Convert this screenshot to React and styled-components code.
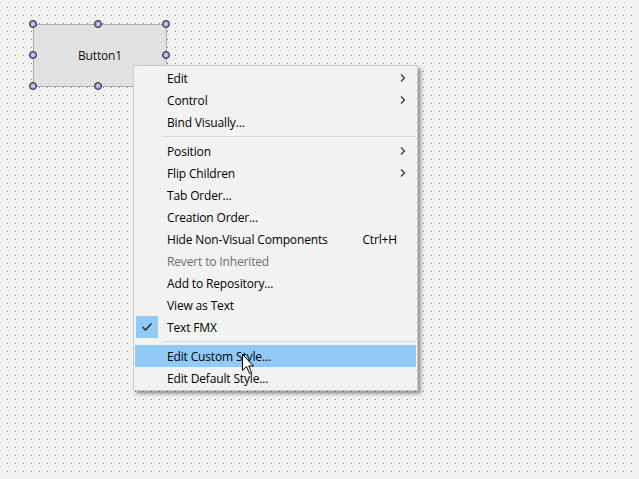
import React from "react";
import styled, { createGlobalStyle } from "styled-components";

const GlobalStyle = createGlobalStyle`
  html, body {
    margin: 0;
    padding: 0;
    background: #f0f0f0;
  }
  body {
    font-family: "Segoe UI", "Open Sans", "Noto Sans", sans-serif;
    font-size: 12px;
    letter-spacing: -0.15px;
  }
`;

// design surface with the 8px dot grid
const Canvas = styled.div`
  position: relative;
  width: 639px;
  height: 479px;
  overflow: hidden;
  background-color: #f0f0f0;
  background-image:
    linear-gradient(to right, #f0f0f0 7px, transparent 7px),
    linear-gradient(to bottom, #f0f0f0 7px, #7c7c7c 7px);
  background-size: 8px 8px;
`;

const DesignButton = styled.div`
  position: absolute;
  left: 33px;
  top: 24px;
  width: 132px;
  height: 61px;
  background: #e1e1e1;
  border: 1px solid #adadad;
  display: flex;
  align-items: center;
  justify-content: center;
  color: #111;
  font-size: 12px;
`;

const Handle = styled.span`
  position: absolute;
  left: ${(p) => p.x - 4}px;
  top: ${(p) => p.y - 4}px;
  width: 6px;
  height: 6px;
  border-radius: 50%;
  border: 1.5px solid #222;
  background: radial-gradient(circle at 50% 50%, #e4e4f8 0, #9a9ae0 55%, #6c6cc0 100%);
`;

const Menu = styled.div`
  position: absolute;
  left: 133px;
  top: 65px;
  width: 281px;
  padding: 1px;
  background: #f2f2f2;
  border: 1px solid #cccccc;
  box-shadow: 3px 3px 3px rgba(0, 0, 0, 0.35);
  display: flex;
  flex-direction: column;
`;

const Item = styled.div`
  position: relative;
  height: 22px;
  display: flex;
  align-items: center;
  padding-left: 32px;
  padding-right: 10px;
  color: ${(p) => (p.disabled ? "#6d6d6d" : "#000")};
  background: ${(p) => (p.active ? "#91c9f7" : "transparent")};
`;

const Label = styled.span`
  flex: 1;
  white-space: nowrap;
`;

const Shortcut = styled.span`
  margin-right: 9px;
`;

const CheckBox = styled.span`
  position: absolute;
  left: 1px;
  top: 0;
  width: 22px;
  height: 22px;
  background: #91c9f7;
  display: flex;
  align-items: center;
  justify-content: center;
`;

const Separator = styled.div`
  height: 7px;
  display: flex;
  align-items: center;
  padding-left: 28px;
  &::after {
    content: "";
    flex: 1;
    border-top: 1px solid #d7d7d7;
  }
`;

const Cursor = styled.svg`
  position: absolute;
  left: 242px;
  top: 354px;
`;

const Chevron = () => (
  <svg width="6" height="8" viewBox="0 0 6 8">
    <polyline points="1,0.5 4.5,4 1,7.5" fill="none" stroke="#333" strokeWidth="1.2" />
  </svg>
);

const Check = () => (
  <svg width="12" height="10" viewBox="0 0 12 10">
    <polyline points="1.5,5 4.5,8 10.5,1.5" fill="none" stroke="#333" strokeWidth="1.6" />
  </svg>
);

const handles = [
  [33, 24], [98, 24], [166, 24],
  [33, 55], [166, 55],
  [33, 86], [98, 86], [166, 86],
];

const items = [
  { label: "Edit", sub: true },
  { label: "Control", sub: true },
  { label: "Bind Visually..." },
  { sep: true },
  { label: "Position", sub: true },
  { label: "Flip Children", sub: true },
  { label: "Tab Order..." },
  { label: "Creation Order..." },
  { label: "Hide Non-Visual Components", shortcut: "Ctrl+H" },
  { label: "Revert to Inherited", disabled: true },
  { label: "Add to Repository..." },
  { label: "View as Text" },
  { label: "Text FMX", checked: true },
  { sep: true },
  { label: "Edit Custom Style...", active: true },
  { label: "Edit Default Style..." },
];

const App = () => {
  return (
    <>
      <GlobalStyle />
      <Canvas>
        <DesignButton>Button1</DesignButton>
        {handles.map(([x, y]) => (
          <Handle key={x + "-" + y} x={x} y={y} />
        ))}
        <Menu>
          {items.map((it, i) =>
            it.sep ? (
              <Separator key={i} />
            ) : (
              <Item key={i} disabled={it.disabled} active={it.active}>
                {it.checked && (
                  <CheckBox>
                    <Check />
                  </CheckBox>
                )}
                <Label>{it.label}</Label>
                {it.shortcut && <Shortcut>{it.shortcut}</Shortcut>}
                {it.sub && <Chevron />}
              </Item>
            )
          )}
        </Menu>
        <Cursor width="13" height="21" viewBox="0 0 13 21">
          <path
            d="M0.5 0.5 L0.5 16.5 L4.5 12.5 L7.5 19.5 L9.5 18.5 L6.8 12 L11.5 12 Z"
            fill="#fff"
            stroke="#000"
            strokeWidth="1"
          />
        </Cursor>
      </Canvas>
    </>
  );
};

export default App;
